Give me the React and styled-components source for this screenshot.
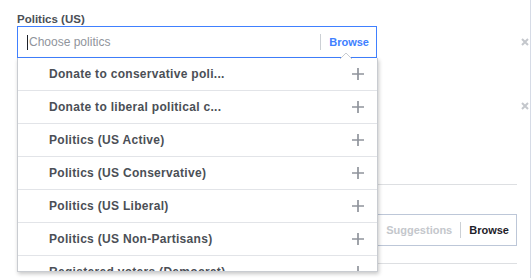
import React from 'react';
import styled, { createGlobalStyle } from 'styled-components';

const GlobalStyle = createGlobalStyle`
    html, body {
        margin: 0;
        padding: 0;
        background: #fff;
        font-family: "Liberation Sans", Arial, sans-serif;
    }
`;

const Panel = styled.div`
    position: relative;
    width: 513px;
    height: 278px;
    padding: 12px 0 0 17px;
    border-right: 1px solid #d6dbe6;
    overflow: hidden;
`;

const FieldRow = styled.div`
    display: flex;
    align-items: flex-end;
    margin-top: ${p => p.top || 0}px;
`;

const FieldBody = styled.div`
    position: relative;
    width: 500px;
    flex-shrink: 0;
`;

const Label = styled.div`
    font-size: 11.5px;
    font-weight: bold;
    color: #4b4f56;
    line-height: 14px;
`;

const InputBox = styled.div`
    box-sizing: border-box;
    width: ${p => p.width || 500}px;
    height: 32px;
    display: flex;
    align-items: center;
    padding: 0 7px 0 9px;
    border: 1px solid ${p => (p.focused ? '#4080ff' : '#bdc7d8')};
    background: #fff;
`;

const Caret = styled.span`
    width: 1px;
    height: 15px;
    background: #1d2129;
    margin-right: 1px;
`;

const Placeholder = styled.span`
    flex: 1;
    font-size: 12px;
    color: #90949c;
`;

const Divider = styled.span`
    width: 1px;
    height: 16px;
    background: #ccd0d5;
    margin: 0 8px 0 0;
`;

const LinkText = styled.span`
    font-size: 11px;
    font-weight: bold;
    color: ${p => p.color};
`;

const Remove = styled.div`
    width: 8px;
    height: 32px;
    margin-left: 4px;
    display: flex;
    align-items: center;
    justify-content: center;
`;

const Rule = styled.div`
    width: 500px;
    height: 1px;
    background: #dddfe2;
    margin-top: ${p => p.top}px;
`;

const SuggestBox = styled(InputBox)`
    justify-content: flex-end;
    margin-top: 29px;
`;

const Notch = styled.svg`
    position: absolute;
    left: 323px;
    top: 40px;
    z-index: 3;
`;

const Menu = styled.div`
    position: absolute;
    left: 0;
    top: 46px;
    width: 361px;
    height: 214px;
    box-sizing: border-box;
    background: #fff;
    border: 1px solid #c9ccd1;
    border-top: none;
    box-shadow: 1px 2px 4px rgba(0, 0, 0, 0.22);
    overflow: hidden;
    z-index: 2;
`;

const MenuItem = styled.div`
    height: 32px;
    display: flex;
    align-items: center;
    justify-content: space-between;
    padding: 0 13px 0 31px;
    border-bottom: 1px solid #e2e4e8;
    font-size: 12px;
    font-weight: bold;
    letter-spacing: 0.3px;
    color: #4b4f56;
    white-space: nowrap;
`;

const Plus = () => (
    <svg width="12" height="12" viewBox="0 0 12 12">
        <path d="M6 0v12M0 6h12" stroke="#90949c" strokeWidth="1.7" />
    </svg>
);

const Cross = () => (
    <svg width="8" height="8" viewBox="0 0 8 8">
        <path d="M1 1l6 6M7 1l-6 6" stroke="#c4c7cc" strokeWidth="2" />
    </svg>
);

const items = [
    'Donate to conservative poli...',
    'Donate to liberal political c...',
    'Politics (US Active)',
    'Politics (US Conservative)',
    'Politics (US Liberal)',
    'Politics (US Non-Partisans)',
    'Registered voters (Democrat)',
];

export default function App() {
    return (
        <>
            <GlobalStyle />
            <Panel>
                <FieldRow>
                    <FieldBody>
                        <Label>Politics (US)</Label>
                        <InputBox focused width={360}>
                            <Caret />
                            <Placeholder>Choose politics</Placeholder>
                            <Divider />
                            <LinkText color="#4080ff">Browse</LinkText>
                        </InputBox>
                        <Notch width="12" height="7" viewBox="0 0 12 7">
                            <path d="M0 7L6 1l6 6" fill="#fff" stroke="#c9ccd1" strokeWidth="1" />
                        </Notch>
                        <Menu>
                            {items.map(item => (
                                <MenuItem key={item}>
                                    <span>{item}</span>
                                    <Plus />
                                </MenuItem>
                            ))}
                        </Menu>
                    </FieldBody>
                    <Remove><Cross /></Remove>
                </FieldRow>
                <FieldRow top={32}>
                    <FieldBody>
                        <InputBox width={340} />
                    </FieldBody>
                    <Remove><Cross /></Remove>
                </FieldRow>
                <Rule top={62} />
                <SuggestBox>
                    <LinkText color="#c4c7cc" style={{ marginRight: 8 }}>Suggestions</LinkText>
                    <Divider />
                    <LinkText color="#1d2129">Browse</LinkText>
                </SuggestBox>
                <Rule top={17} />
            </Panel>
        </>
    );
}
